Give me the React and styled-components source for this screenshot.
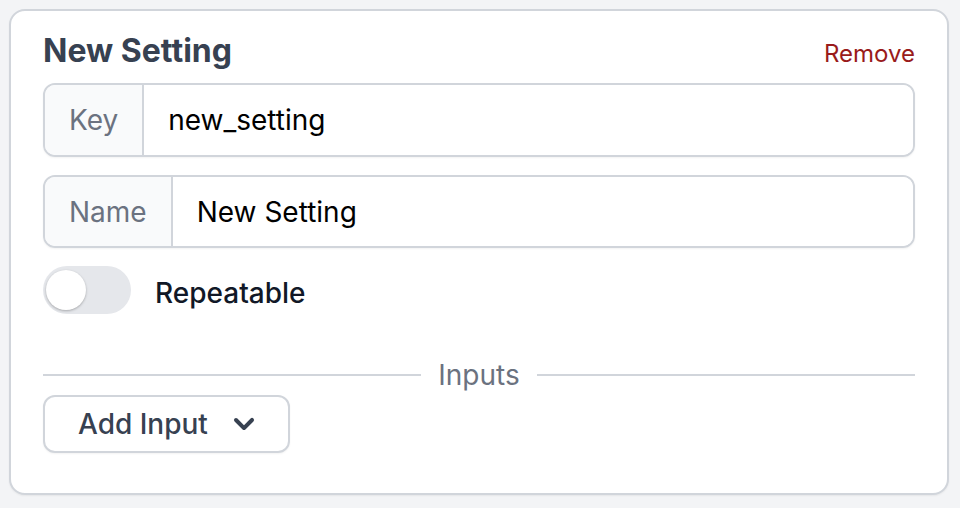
import styled, { createGlobalStyle } from "styled-components"

const GlobalStyle = createGlobalStyle`
  html, body {
    margin: 0;
    background: #f3f4f6;
  }
  body {
    padding: 9px 11px 13px 9px;
    font-family: Inter, "Noto Sans", sans-serif;
  }
`

const Card = styled.div`
  box-sizing: border-box;
  width: 940px;
  height: 486px;
  background: #fff;
  border: 2px solid #d1d5db;
  border-radius: 16px;
  box-shadow: 0 1px 2px rgba(0, 0, 0, 0.06);
  padding: 16px 32px 40px;
  display: flex;
  flex-direction: column;
`

const Header = styled.div`
  display: flex;
  justify-content: space-between;
  align-items: baseline;
  margin-bottom: 8px;
`

const Title = styled.h2`
  margin: 0;
  font-size: 32px;
  line-height: 48px;
  font-weight: 700;
  color: #374151;
`

const RemoveLink = styled.button`
  border: none;
  background: none;
  padding: 0;
  font-family: inherit;
  font-size: 24px;
  line-height: 32px;
  color: #991b1b;
  cursor: pointer;
`

const Field = styled.div`
  box-sizing: border-box;
  display: flex;
  height: 74px;
  border: 2px solid #d1d5db;
  border-radius: 12px;
  overflow: hidden;
  box-shadow: 0 1px 2px rgba(0, 0, 0, 0.05);
  margin-top: ${(p) => p.$gap || 0}px;
`

const Addon = styled.span`
  display: flex;
  align-items: center;
  padding: 0 24px;
  background: #f9fafb;
  border-right: 2px solid #d1d5db;
  font-size: 28px;
  color: #6b7280;
`

const TextInput = styled.input`
  flex: 1;
  border: none;
  outline: none;
  padding: 0 24px;
  font-family: inherit;
  font-size: 28px;
  color: #000;
  background: #fff;
`

const ToggleRow = styled.label`
  display: flex;
  align-items: center;
  gap: 24px;
  margin-top: 18px;
  height: 48px;
`

const Track = styled.span`
  position: relative;
  width: 88px;
  height: 48px;
  border-radius: 24px;
  background: #e5e7eb;
  flex-shrink: 0;
`

const Knob = styled.span`
  position: absolute;
  top: 4px;
  left: 3px;
  width: 40px;
  height: 40px;
  border-radius: 50%;
  background: #fff;
  box-shadow: 0 1px 3px rgba(0, 0, 0, 0.18), 0 1px 2px rgba(0, 0, 0, 0.1);
`

const ToggleLabel = styled.span`
  padding-top: 5px;
  font-size: 28px;
  font-weight: 500;
  color: #111827;
`

const Divider = styled.div`
  display: flex;
  align-items: center;
  gap: 17px;
  height: 40px;
  margin-top: 41px;
`

const Line = styled.span`
  flex: 1;
  height: 2px;
  background: #d1d5db;
`

const DividerText = styled.span`
  font-size: 28px;
  color: #6b7280;
`

const MenuButton = styled.button`
  box-sizing: border-box;
  align-self: flex-start;
  display: flex;
  align-items: center;
  gap: 16px;
  height: 58px;
  padding: 0 24px 0 33px;
  border: 2px solid #d1d5db;
  border-radius: 12px;
  background: #fff;
  box-shadow: 0 1px 2px rgba(0, 0, 0, 0.05);
  font-family: inherit;
  font-size: 28px;
  font-weight: 500;
  color: #374151;
  cursor: pointer;
`

const ChevronDown = () => (
  <svg width="40" height="40" viewBox="0 0 20 20" fill="#374151" aria-hidden="true">
    <path
      fillRule="evenodd"
      d="M5.293 7.293a1 1 0 011.414 0L10 10.586l3.293-3.293a1 1 0 111.414 1.414l-4 4a1 1 0 01-1.414 0l-4-4a1 1 0 010-1.414z"
      clipRule="evenodd"
    />
  </svg>
)

const App = () => {
  return (
    <>
      <GlobalStyle />
      <Card>
        <Header>
          <Title>New Setting</Title>
          <RemoveLink>Remove</RemoveLink>
        </Header>
        <Field>
          <Addon>Key</Addon>
          <TextInput defaultValue="new_setting" />
        </Field>
        <Field $gap={18}>
          <Addon>Name</Addon>
          <TextInput defaultValue="New Setting" />
        </Field>
        <ToggleRow>
          <Track>
            <Knob />
          </Track>
          <ToggleLabel>Repeatable</ToggleLabel>
        </ToggleRow>
        <Divider>
          <Line />
          <DividerText>Inputs</DividerText>
          <Line />
        </Divider>
        <MenuButton>
          Add Input
          <ChevronDown />
        </MenuButton>
      </Card>
    </>
  )
}

export default App
